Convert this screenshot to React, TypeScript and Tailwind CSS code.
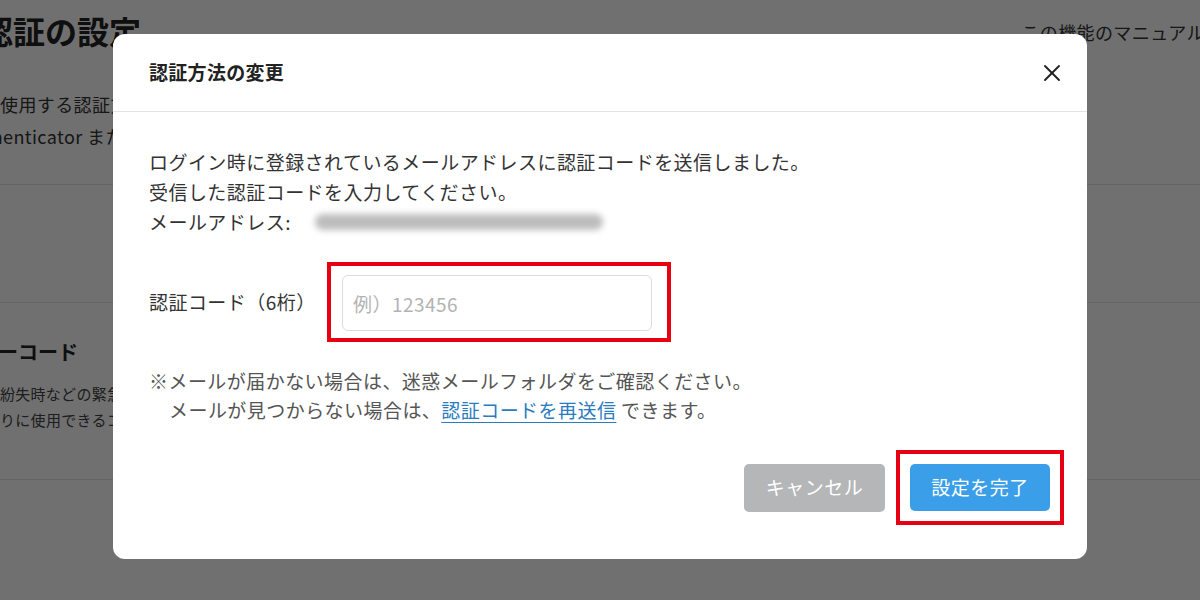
import { X } from 'lucide-react'

const jp = "font-['Noto_Sans_CJK_JP','Noto_Sans',sans-serif]"

function BackgroundPage() {
  return (
    <div className="absolute inset-0 bg-white text-[#222]">
      <div className="flex items-start justify-between">
        <h1 className="ml-[-19px] mt-[8px] text-[32px] font-bold leading-[44px]">認証の設定</h1>
        <a className="mr-[-60px] mt-[18px] whitespace-nowrap text-[18px] leading-[28px] tracking-[0.4px] text-[#333]">この機能のマニュアルを見る</a>
      </div>
      <div className="mt-[36px] text-[18px] leading-[32px] tracking-[0.4px] text-[#333]">
        <p className="whitespace-nowrap">使用する認証方法を選択してください。</p>
        <p className="ml-[-38px] whitespace-nowrap">Authenticator または メールによる認証が利用できます。</p>
      </div>
      <div className="mt-[32px] h-[118px] border-t border-[#e6e6e6]" />
      <div className="border-t border-[#e6e6e6] pt-[34px] pb-[46px]">
        <h2 className="ml-[-82px] whitespace-nowrap text-[20px] font-bold leading-[30px]">リカバリーコード</h2>
        <div className="mt-[14px] text-[15px] leading-[26px] tracking-[0.3px] text-[#444]">
          <p className="ml-[-46px] whitespace-nowrap">端末の紛失時などの緊急時に利用できるコードです。</p>
          <p className="whitespace-nowrap">りに使用できるコードを発行します。</p>
        </div>
      </div>
      <div className="border-t border-[#e6e6e6]" />
    </div>
  )
}

export default function App() {
  return (
    <div className={`relative h-[600px] w-[1200px] overflow-hidden ${jp}`}>
      <BackgroundPage />
      <div className="absolute inset-0 bg-black/[0.56]" />

      <div className="absolute left-[113px] top-[34px] w-[974px] rounded-xl bg-white text-[#333]">
        {/* header */}
        <div className="flex h-[78px] items-center justify-between border-b border-[#e3e3e3] pl-[36px] pr-[21px]">
          <h3 className="text-[19px] font-bold tracking-[0.3px] text-[#222]">認証方法の変更</h3>
          <X className="h-[28px] w-[28px] text-[#222]" strokeWidth={1.6} />
        </div>

        {/* body */}
        <div className="px-[36px] pt-[35px] pb-[34px] tracking-[0.45px]">
          <div className="text-[19px] leading-[30px]">
            <p>ログイン時に登録されているメールアドレスに認証コードを送信しました。</p>
            <p>受信した認証コードを入力してください。</p>
            <div className="flex items-center">
              <span>メールアドレス:</span>
              <span className="ml-[24px] h-[16px] w-[288px] rounded-full bg-[#bdbdbd] blur-[3px]" />
            </div>
          </div>

          <div className="mt-[25px] flex items-center">
            <label className="w-[169px] whitespace-nowrap text-[19px] leading-[30px]">認証コード（6桁）</label>
            <div className="ml-[9px] border-4 border-[#e60012] pb-[7px] pl-[11px] pr-[15px] pt-[9px]">
              <input
                className="h-[56px] w-[310px] rounded-md border border-[#dcdcdc] px-[10px] text-[19px] text-[#333] outline-none placeholder:text-[#b3b3b3]"
                placeholder="例）123456"
              />
            </div>
          </div>

          <div className="mt-[24px] text-[19px] leading-[29px] text-[#555]">
            <p>※メールが届かない場合は、迷惑メールフォルダをご確認ください。</p>
            <p className="pl-[20px]">
              メールが見つからない場合は、
              <a className="text-[#2a7cbf] underline underline-offset-4">認証コードを再送信</a>
              {' '}できます。
            </p>
          </div>

          <div className="mt-[26px] flex items-center justify-end">
            <button className="h-[48px] w-[141px] rounded-[5px] bg-[#b5b6b8] text-[19px] text-white">
              キャンセル
            </button>
            <div className="ml-[11px] mr-[-13px] border-4 border-[#e60012] px-[10px] py-[10px]">
              <button className="h-[47px] w-[140px] rounded-[5px] bg-[#3a9ee9] text-[19px] text-white">
                設定を完了
              </button>
            </div>
          </div>
        </div>
      </div>
    </div>
  )
}
